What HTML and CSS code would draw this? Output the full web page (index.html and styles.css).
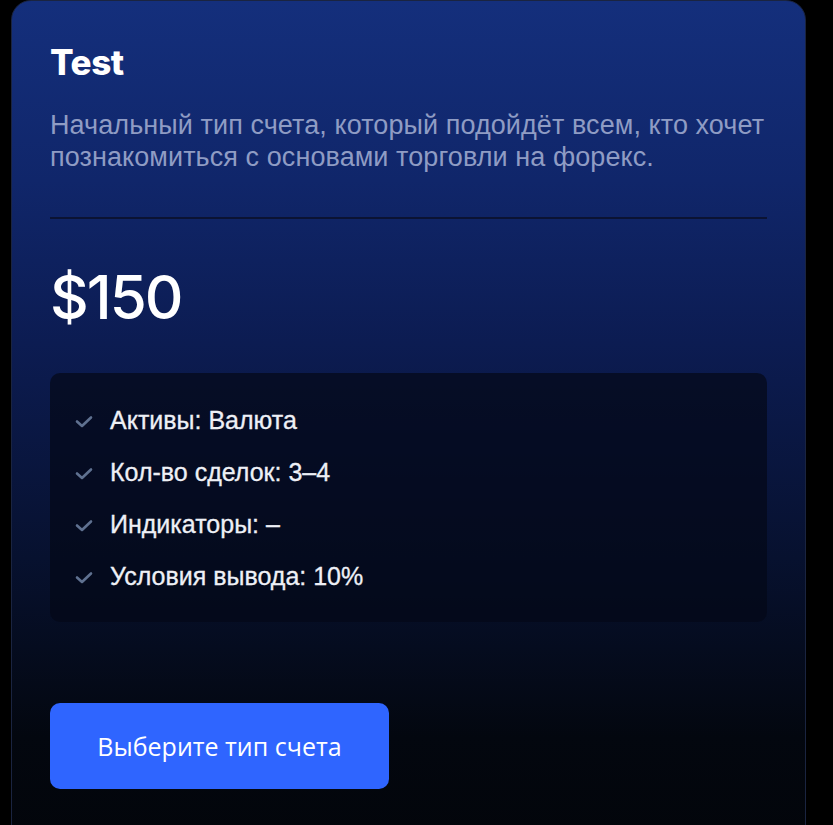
FILE: index.html
```html
<!DOCTYPE html>
<html lang="ru">
<head>
<meta charset="utf-8">
<title>Test</title>
<link rel="stylesheet" href="styles.css">
</head>
<body>
<div class="page">
  <div class="card">
    <h2 class="card-title">Test</h2>
    <p class="card-desc">Начальный тип счета, который подойдёт всем, кто хочет познакомиться с основами торговли на форекс.</p>
    <hr class="divider">
    <div class="price">$150</div>
    <ul class="features">
      <li class="feature"><svg class="check" viewBox="0 0 20 20" width="20" height="20"><path d="M3 10.5l5 4.5 9-8.5" fill="none" stroke="#5f7190" stroke-width="2.6" stroke-linecap="round" stroke-linejoin="round"/></svg><span>Активы: Валюта</span></li>
      <li class="feature"><svg class="check" viewBox="0 0 20 20" width="20" height="20"><path d="M3 10.5l5 4.5 9-8.5" fill="none" stroke="#5f7190" stroke-width="2.6" stroke-linecap="round" stroke-linejoin="round"/></svg><span>Кол-во сделок: 3–4</span></li>
      <li class="feature"><svg class="check" viewBox="0 0 20 20" width="20" height="20"><path d="M3 10.5l5 4.5 9-8.5" fill="none" stroke="#5f7190" stroke-width="2.6" stroke-linecap="round" stroke-linejoin="round"/></svg><span>Индикаторы: –</span></li>
      <li class="feature"><svg class="check" viewBox="0 0 20 20" width="20" height="20"><path d="M3 10.5l5 4.5 9-8.5" fill="none" stroke="#5f7190" stroke-width="2.6" stroke-linecap="round" stroke-linejoin="round"/></svg><span>Условия вывода: 10%</span></li>
    </ul>
    <button class="cta">Выберите тип счета</button>
  </div>
</div>
</body>
</html>
```
FILE: styles.css
```css
html, body {
  margin: 0;
  padding: 0;
  background: #000;
  height: 100%;
  overflow: hidden;
}
.page {
  padding-left: 11px;
}
.card {
  box-sizing: border-box;
  width: 795px;
  min-height: 900px;
  padding: 38px 38px 0 38px;
  border: 1px solid #1a2440;
  border-radius: 20px;
  background: linear-gradient(180deg, #142f7c 0%, #10266a 20%, #0c1c52 38%, #07112f 62%, #03070f 82%, #020408 100%);
  display: flex;
  flex-direction: column;
  align-items: flex-start;
}
.card-title {
  margin: 2px 0 0 0;
  font-family: Inter, "Noto Sans", sans-serif;
  font-weight: 800;
  font-size: 35px;
  line-height: 42px;
  color: #fff;
  letter-spacing: -0.4px;
}
.card-desc {
  margin: 26px 0 0 0;
  font-family: "Liberation Sans", Arial, sans-serif;
  font-size: 27px;
  line-height: 32px;
  color: #8f9cc4;
  letter-spacing: 0.08px;
}
.divider {
  align-self: stretch;
  margin: 44px 0 0 0;
  border: 0;
  height: 2px;
  background: #0b1333;
}
.price {
  margin-top: 43px;
  font-family: Inter, "Noto Sans", sans-serif;
  font-weight: 500;
  font-size: 60px;
  line-height: 70px;
  color: #fff;
  letter-spacing: -2px;
}
.features {
  align-self: stretch;
  list-style: none;
  margin: 41px 0 0 0;
  padding: 32px 24px 30px 24px;
  background: rgba(4, 8, 24, 0.72);
  border-radius: 10px;
  display: flex;
  flex-direction: column;
  gap: 21px;
}
.feature {
  display: flex;
  align-items: center;
  gap: 16px;
  font-family: "Liberation Sans", Arial, sans-serif;
  font-size: 25px;
  line-height: 31px;
  color: #eef0f6;
  -webkit-text-stroke: 0.3px #eef0f6;
}
.check {
  flex: none;
}
.cta {
  margin-top: 81px;
  width: 339px;
  height: 86px;
  border: 0;
  border-radius: 10px;
  background: #2f65ff;
  color: #fff;
  font-family: "Open Sans", "Noto Sans", sans-serif;
  font-size: 25px;
  cursor: pointer;
}
```
